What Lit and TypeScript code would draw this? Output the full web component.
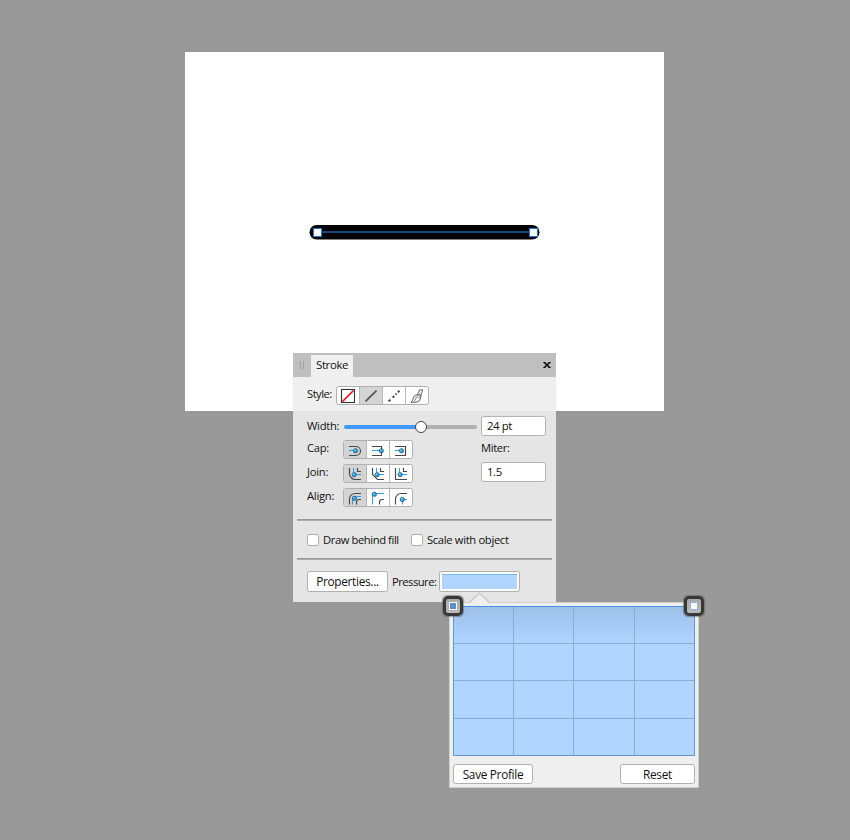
import { LitElement, html, css, svg, nothing } from "lit";
import { customElement, property } from "lit/decorators.js";

const dot = (x: number, y: number) => svg`
  <circle cx=${x} cy=${y} r="2.1" fill="#22a4e4" stroke="#2f6480" stroke-width=".9"/>
  <circle cx=${x - 0.6} cy=${y - 0.6} r="0.8" fill="#8fdcff"/>`;
const dark = (d: string) => svg`<path d=${d} fill="none" stroke="#484848" stroke-width="1.15"/>`;
const blue = (d: string) => svg`<path d=${d} fill="none" stroke="#2da0f0" stroke-width="1"/>`;

const icons: Record<string, unknown> = {
  none: svg`<rect x="4.5" y="2.5" width="13" height="13" fill="#fff" stroke="#333" stroke-width="1.1"/>
    <path d="M5.5 14.5L16.5 3.5" stroke="#f00e18" stroke-width="1.7"/>`,
  solid: svg`<path d="M5.5 14.3L16.5 3.6" stroke="#555" stroke-width="1.8"/>`,
  dash: svg`<path d="M5.6 14.4L7.4 12.6M9.6 10.6L11.2 9M12.6 7.6L13.6 6.6M14.9 5.3L16.5 3.7" stroke="#444" stroke-width="1.9"/>`,
  brush: svg`<g stroke-linejoin="round"><path d="M11.3 8.2L13.6 2.8h3.2l-2.2 6.6z" fill="#e4e4e4" stroke="#666" stroke-width=".9"/>
    <path d="M9.6 8h5.2c.2 4-1.8 7.2-5 7.2H5c2.6-1.8 1.9-5.7 4.6-7.2z" fill="#fff" stroke="#505050"/>
    <path d="M9.4 10.2h5M10.4 11l-2.2 3.4" fill="none" stroke="#777" stroke-width=".9"/></g>`,
  capRound: [dark("M5 5.5h7a4.5 4.5 0 0 1 0 9H5"), blue("M5 9.5h6"), dot(11.5, 9.8)],
  capSquare: [dark("M5 5.5h9.5v9H5"), blue("M5 9.5h9"), dot(14.3, 9.8)],
  capButt: [dark("M5 5.5h10.5v9H5"), blue("M5 9.5h6"), dot(11.5, 9.8)],
  joinRound: [dark("M5.5 3v5.5a6 6 0 0 0 6 6H17M13.5 3v3.5H17"), blue("M9.5 3v6.5H17"), dot(10.2, 9.7)],
  joinBevel: [dark("M5.5 3v6.5l5 5H17M13.5 3v3.5H17"), blue("M9.5 3v6.5H17"), dot(10.2, 9.7)],
  joinMiter: [dark("M5.5 3v11.5H17M13.5 3v3.5H17"), blue("M9.5 3v6.5H17"), dot(10.2, 9.7)],
  alignCenter: [dark("M5.5 15.5v-5.5a5.5 5.5 0 0 1 5.5-5.5H17M12.5 15.5v-2.2a2.8 2.8 0 0 1 2.8-2.8H17"), blue("M8.5 15.5V9.5a2 2 0 0 1 2-2H17"), dot(10.4, 9.3)],
  alignInside: [blue("M5.5 15.5V4.5H17"), dark("M12.5 15.5v-2.2a2.8 2.8 0 0 1 2.8-2.8H17"), dot(7.4, 5.3)],
  alignOutside: [dark("M5.5 15.5v-5.5a5.5 5.5 0 0 1 5.5-5.5H17"), blue("M12.5 15.5v-5H17"), dot(12.3, 10.5)],
};

@customElement("icon-group")
class IconGroup extends LitElement {
  @property({ attribute: false }) names: string[] = [];
  @property({ type: Number }) selected = 0;
  static styles = css`
    :host { display: inline-flex; box-sizing: border-box; height: 19px; border: 1px solid #b0b0b0; border-radius: 2.5px; background: #fff; overflow: hidden; }
    .cell { width: 22px; height: 17px; }
    .cell + .cell { border-left: 1px solid #b8b8b8; }
    .on { background: #d4d4d4; }
    svg { display: block; overflow: visible; }
  `;
  render() {
    return this.names.map((n, i) => html`<div class="cell ${i === this.selected ? "on" : ""}">
      <svg width="22" height="17" viewBox="0 0 22 17">${icons[n] ?? nothing}</svg></div>`);
  }
}

@customElement("app-root")
class AppRoot extends LitElement {
  static styles = css`
    :host { display: block; position: relative; width: 850px; height: 840px; overflow: hidden; background: #999;
      font: 11px/16px "Open Sans", "Noto Sans", sans-serif; color: #111; }
    * { box-sizing: border-box; }
    .artboard { position: absolute; left: 185px; top: 52px; width: 479px; height: 359px; background: #fff; }
    .artboard svg { display: block; }
    .panel { position: absolute; left: 293px; top: 353px; width: 263px; height: 249px; background: #e5e5e5; }
    .head { height: 24px; background: #bfbfbf; display: flex; align-items: stretch; padding-top: 2px; }
    .grip { width: 4px; height: 8px; margin: 6px 7px 0; border: solid #a0a0a0; border-width: 0 1px; }
    .tab { width: 42px; background: #f0f0f0; padding: 2px 0 0 5px; white-space: nowrap; font-size: 11.5px; letter-spacing: -0.4px; }
    .close { margin: 6px 5px 0 auto; width: 8px; height: 8px; display: block; }
    .style { height: 34px; background: #efefef; padding: 9px 0 0 14px; display: flex; }
    .style .label { width: 29px; letter-spacing: -0.5px; }
    .body { padding: 5px 10px 0 14px; display: grid; grid-template-columns: 174px 65px; }
    .row { display: flex; height: 24px; }
    .label { white-space: nowrap; font-size: 11.2px; letter-spacing: -0.35px; }
    .row .label { width: 36px; letter-spacing: -0.25px; }
    .row.width .label { width: 37px; padding-top: 2px; }
    .slider { width: 133px; height: 4px; margin-top: 9px; border-radius: 2px; background: linear-gradient(to right, #4098f8 77px, #b0b0b0 77px); }
    .knob { width: 12px; height: 12px; margin: -4px 0 0 71px; border: 1px solid #444; border-radius: 50%; background: #fff; }
    .field { height: 20px; border: 1px solid #b3b3b3; border-radius: 2.5px; background: #fff; padding: 1px 5px; white-space: nowrap; font-size: 11.4px; letter-spacing: -0.4px; }
    .drop { margin-top: -2px; }
    .rule { height: 2px; margin: 0 4px; background: linear-gradient(#999 50%, #adadad 50%); }
    .rule.first { margin-top: 7px; }
    .checks { height: 37px; display: flex; align-items: center; padding: 0 0 0 14px; }
    .box { width: 12px; height: 12px; border: 1px solid #b0b0b0; border-radius: 2px; background: #fff; margin-right: 4px; }
    .checks .label { width: 88px; letter-spacing: -0.4px; }
    .checks .label.wide { letter-spacing: -0.32px; }
    .foot { display: flex; padding: 11px 0 0 14px; }
    .foot .label { width: 51px; padding: 3px 0 0 4px; letter-spacing: -0.5px; }
    .btn { height: 20px; border: 1px solid #b0b0b0; border-radius: 2.5px; background: #fff; text-align: center; font-size: 11.8px; letter-spacing: -0.3px; line-height: 19px; white-space: nowrap; }
    .foot .btn { width: 81px; height: 21px; }
    .pressure { width: 81px; height: 21px; border: 1px solid #b0b0b0; border-radius: 2.5px; background: #fff; padding: 2px; }
    .fill { height: 15px; background: #b0d5ff; border-top: 1px solid #7db5f5; }
    .popover { position: absolute; left: 449px; top: 602px; width: 250px; height: 186px; background: #efefef; border: 1px solid #d0d0d0; padding: 3px; border-radius: 1px; }
    .arrow { position: absolute; left: 19px; top: -11px; display: block; }
    .chart { display: block; width: 242px; height: 150px; }
    .actions { display: flex; justify-content: space-between; margin-top: 8px; }
    .save { width: 80px; }
    .reset { width: 75px; }
    .handle { position: absolute; top: -7px; width: 20px; height: 20px; border: 3.5px solid #383838; border-radius: 5px; background: linear-gradient(#aaa, #bbb); box-shadow: 0 0 1px 0.5px #5558; display: flex; align-items: center; justify-content: center; }
    .handle i { width: 8px; height: 8px; background: #5d8ed0; border: 1px solid #fff; }
    .handle.l { left: -7px; }
    .handle.r { left: 234px; }
    .handle.r i { background: #fff; border-color: #8fb4ea; }
  `;
  render() {
    return html`
      <div class="artboard"><svg width="479" height="359">
        <rect x="124.5" y="173" width="230" height="14.5" rx="7.25"/>
        <path d="M132 180h216" stroke="#15467c" stroke-width="2"/>
        <g fill="#fff" stroke="#1874d8"><rect x="128.5" y="176.5" width="8" height="8"/><rect x="344.5" y="176.5" width="8" height="8"/></g>
      </svg></div>
      <section class="panel">
        <div class="head"><div class="grip"></div><div class="tab">Stroke</div>
          <svg class="close" viewBox="0 0 8 8"><path d="M1.3 1.5l5.4 5M6.7 1.5L1.3 6.5" stroke="#111" stroke-width="1.7"/><path d="M.3 1.5h2.2M5.5 1.5h2.2M.3 6.5h2.2M5.5 6.5h2.2" stroke="#111" stroke-width="1"/></svg></div>
        <div class="style"><span class="label">Style:</span>
          <icon-group .names=${["none", "solid", "dash", "brush"]} .selected=${1}></icon-group></div>
        <div class="body">
          <div class="row width"><span class="label">Width:</span><div class="slider"><div class="knob"></div></div></div>
          <div class="field">24 pt</div>
          <div class="row"><span class="label">Cap:</span><icon-group .names=${["capRound", "capSquare", "capButt"]}></icon-group></div>
          <span class="label">Miter:</span>
          <div class="row"><span class="label">Join:</span><icon-group .names=${["joinRound", "joinBevel", "joinMiter"]}></icon-group></div>
          <div class="field drop">1.5</div>
          <div class="row"><span class="label">Align:</span><icon-group .names=${["alignCenter", "alignInside", "alignOutside"]}></icon-group></div>
        </div>
        <div class="rule first"></div>
        <div class="checks"><div class="box"></div><span class="label">Draw behind fill</span><div class="box"></div><span class="label wide">Scale with object</span></div>
        <div class="rule"></div>
        <div class="foot"><div class="btn">Properties...</div><span class="label">Pressure:</span><div class="pressure"><div class="fill"></div></div></div>
      </section>
      <section class="popover">
        <svg class="arrow" width="22" height="12"><path d="M0.5 11.5L10.5 1.5L20.5 11.5V12H0.5z" fill="#efefef"/><path d="M0.5 10.5L10.5 1L20.5 10.5" fill="none" stroke="#c6c6c6" stroke-width="1.2"/></svg>
        <svg class="chart" viewBox="0 0 242 150">
          <defs><linearGradient id="g" x2="0" y2="1"><stop stop-color="#9cc0e8"/><stop offset=".25" stop-color="#b0d5ff"/></linearGradient></defs>
          <rect x=".5" y=".5" width="241" height="149" fill="url(#g)" stroke="#6498d0"/>
          <path d="M60.5 1v148M120.5 1v148M181.5 1v148M1 37.5h240M1 74.5h240M1 112.5h240" stroke="#86aedb"/>
          <path d="M0 .5h242" stroke="#4a90e2"/>
        </svg>
        <div class="actions"><div class="btn save">Save Profile</div><div class="btn reset">Reset</div></div>
        <div class="handle l"><i></i></div><div class="handle r"><i></i></div>
      </section>`;
  }
}
